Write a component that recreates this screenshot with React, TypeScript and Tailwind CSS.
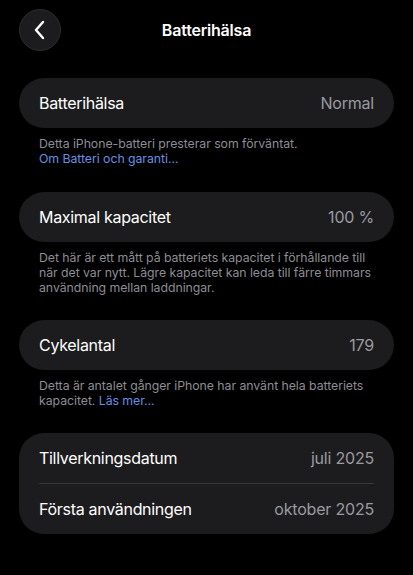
import React from "react";

const font = { fontFamily: "Inter, 'Noto Sans', sans-serif" };

function Row({ label, value }: { label: string; value: string }) {
  return (
    <div className="flex h-[50px] items-center justify-between px-5">
      <span className="text-[16px] text-white tracking-[-0.3px]">{label}</span>
      <span className="text-[16px] text-[#9a9aa0] tracking-[-0.2px]">{value}</span>
    </div>
  );
}

export default function App() {
  return (
    <div className="min-h-[575px] w-[413px] bg-black" style={font}>
      <div className="relative flex h-[60px] items-center justify-center">
        <button className="absolute left-[19px] top-[9px] flex h-[42px] w-[42px] items-center justify-center rounded-full border border-[#2c2c2e] bg-[#1c1c1e]">
          <svg width="14" height="20" viewBox="0 0 14 20" fill="none">
            <path d="M10 2 L3 10 L10 18" stroke="white" strokeWidth="2.4" strokeLinecap="round" strokeLinejoin="round" />
          </svg>
        </button>
        <h1 className="text-[16px] font-semibold text-white tracking-[-0.2px]">Batterihälsa</h1>
      </div>

      <div className="px-[19px] pt-[18px]">
        <div className="rounded-full bg-[#1c1c1e]">
          <Row label="Batterihälsa" value="Normal" />
        </div>
        <p className="mt-2 px-5 text-[12.3px] leading-[15px] tracking-[-0.05px] text-[#8d8d93]">
          Detta iPhone-batteri presterar som förväntat.
          <br />
          <span className="text-[#6a8fe0]">Om Batteri och garanti...</span>
        </p>

        <div className="mt-[26px] rounded-full bg-[#1c1c1e]">
          <Row label="Maximal kapacitet" value="100 %" />
        </div>
        <p className="mt-2 px-5 text-[12.3px] leading-[15px] tracking-[-0.05px] text-[#8d8d93]">
          Det här är ett mått på batteriets kapacitet i förhållande till när det var nytt. Lägre kapacitet kan leda till färre timmars användning mellan laddningar.
        </p>

        <div className="mt-[25px] rounded-full bg-[#1c1c1e]">
          <Row label="Cykelantal" value="179" />
        </div>
        <p className="mt-2 px-5 text-[12.3px] leading-[15px] tracking-[-0.05px] text-[#8d8d93]">
          Detta är antalet gånger iPhone har använt hela batteriets kapacitet. <span className="text-[#6a8fe0]">Läs mer...</span>
        </p>

        <div className="mt-[25px] rounded-[25px] bg-[#1c1c1e]">
          <Row label="Tillverkningsdatum" value="juli 2025" />
          <div className="mx-5 h-px bg-[#38383a]" />
          <Row label="Första användningen" value="oktober 2025" />
        </div>
      </div>
    </div>
  );
}
